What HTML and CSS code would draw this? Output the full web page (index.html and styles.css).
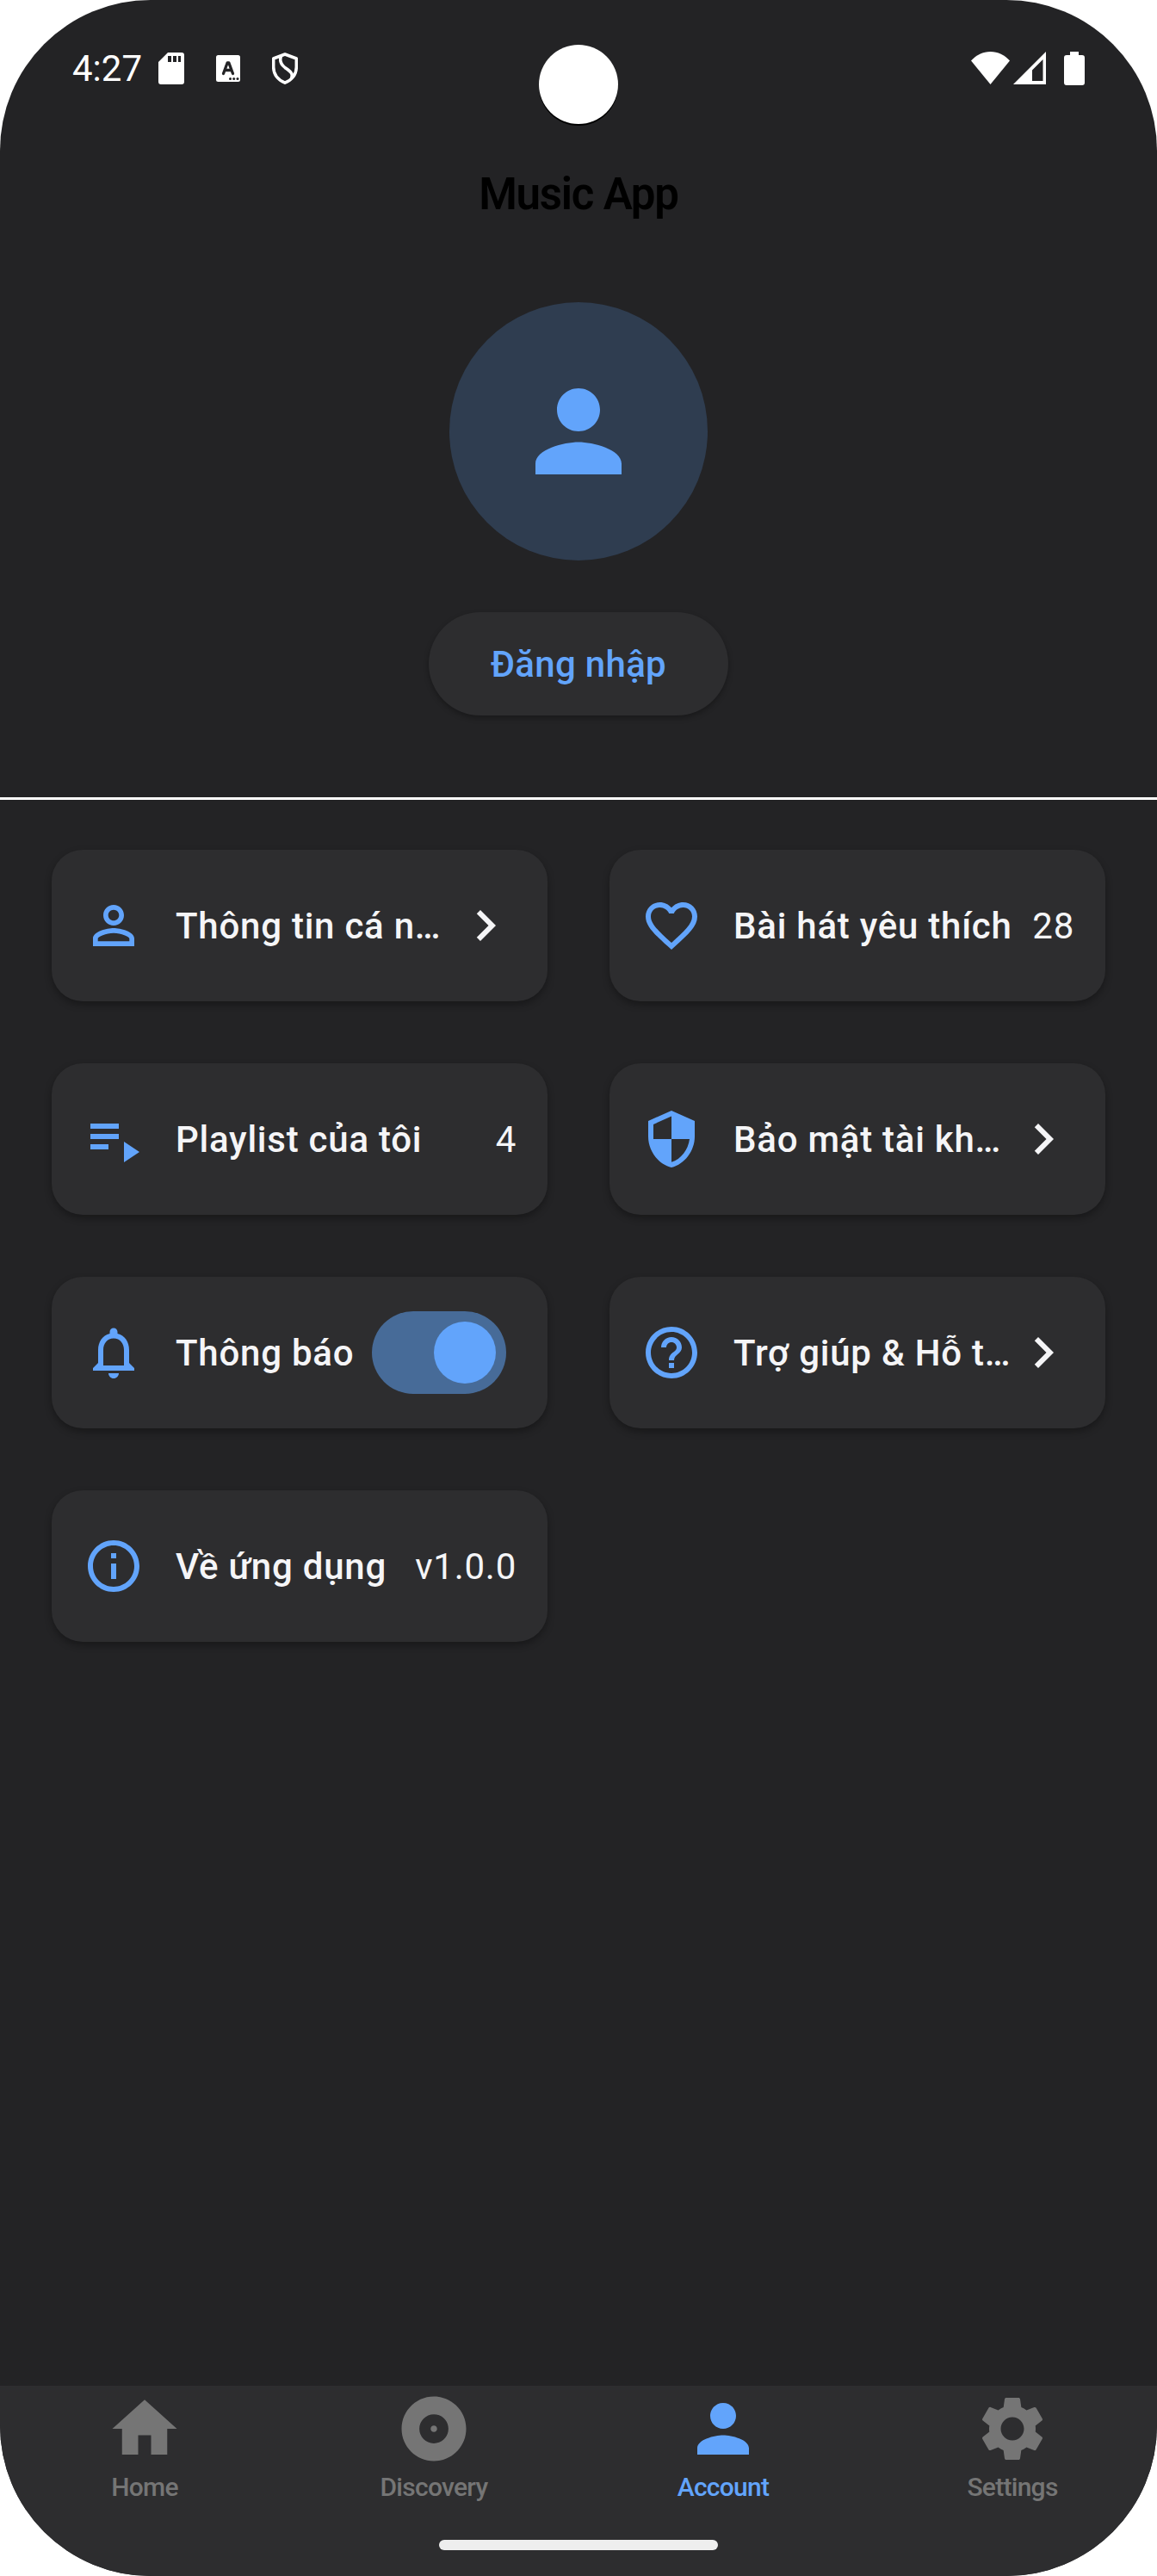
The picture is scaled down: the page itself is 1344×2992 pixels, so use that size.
FILE: index.html
```html
<!DOCTYPE html>
<html lang="vi">
<head>
<meta charset="utf-8">
<title>Music App</title>
<link rel="stylesheet" href="styles.css">
</head>
<body>
<div class="screen">
  <div class="status-bar">
    <div class="status-left">
      <span class="clock">4:27</span>
      <svg class="sd" viewBox="0 0 30 37"><path fill="#fff" fill-rule="evenodd" d="M11 0H27a3 3 0 0 1 3 3V34a3 3 0 0 1-3 3H3a3 3 0 0 1-3-3V11ZM11 4V11H15V4ZM17 4V11H21V4ZM23 4V11H26V4Z"/></svg>
      <svg class="lang" viewBox="0 0 28 31"><rect width="28" height="31" rx="2.500" fill="#fff"/><path d="M8.500 21.500L13.200 8.800H14.800L19.500 21.500M10.500 17.500H17.500" fill="none" stroke="#232325" stroke-width="3.300" stroke-linecap="round" stroke-linejoin="round"/><g fill="#232325"><circle cx="16.500" cy="27.500" r="1.500"/><circle cx="20.700" cy="27.500" r="1.500"/><circle cx="25" cy="27.500" r="1.500"/></g></svg>
      <svg class="guard" viewBox="0 0 30 37"><path d="M15 2L28.300 7V17C28.300 25 23.500 31.500 15 35.200C6.500 31.500 1.700 25 1.700 17V7ZM10.500 4.500C8.500 9.500 10 13.500 15 17.500C20.500 21.500 25 24 22.500 29.500" fill="none" stroke="#fff" stroke-width="3.500" stroke-linejoin="round"/></svg>
    </div>
    <div class="camera"></div>
    <div class="status-right">
      <svg class="wifi" viewBox="0 0 45 38"><path fill="#fff" d="M22.500 38L0 10.500C6 4 14 0 22.500 0S39 4 45 10.500Z"/></svg>
      <svg class="signal" viewBox="0 0 38 38"><path fill="#fff" fill-rule="evenodd" d="M38 0V38H0ZM34.500 9L22 21.500V34H34.500Z"/></svg>
      <svg class="battery" viewBox="0 0 24 39"><path fill="#fff" d="M7 0H17V4H21a3 3 0 0 1 3 3V36a3 3 0 0 1-3 3H3a3 3 0 0 1-3-3V7a3 3 0 0 1 3-3H7Z"/></svg>
    </div>
  </div>
  <h1 class="title">Music App</h1>
  <div class="profile">
    <div class="avatar"><svg viewBox="0 0 24 24"><path d="M12 12c2.210 0 4-1.790 4-4s-1.790-4-4-4-4 1.790-4 4 1.790 4 4 4zm0 2c-2.670 0-8 1.340-8 4v2h16v-2c0-2.660-5.330-4-8-4z"/></svg></div>
    <button class="login">Đăng nhập</button>
  </div>
  <div class="grid">
    <div class="card">
      <svg class="icon" viewBox="0 0 24 24"><path d="M12 5.900c1.160 0 2.100.94 2.100 2.100s-.94 2.100-2.100 2.100S9.900 9.160 9.900 8s.94-2.100 2.100-2.100m0 9c2.970 0 6.100 1.460 6.100 2.100v1.100H5.900V17c0-.64 3.130-2.100 6.100-2.100M12 4C9.790 4 8 5.790 8 8s1.790 4 4 4 4-1.790 4-4-1.790-4-4-4zm0 9c-2.670 0-8 1.340-8 4v3h16v-3c0-2.660-5.330-4-8-4z"/></svg>
      <span class="label">Thông tin cá n…</span>
      <svg class="chevron" viewBox="0 0 24 24"><path d="M10 6L8.590 7.410 13.170 12l-4.580 4.590L10 18l6-6z"/></svg>
    </div>
    <div class="card">
      <svg class="icon" viewBox="0 0 24 24"><path d="M16.500 3c-1.740 0-3.410.81-4.500 2.090C10.910 3.810 9.240 3 7.500 3 4.420 3 2 5.420 2 8.500c0 3.780 3.400 6.860 8.550 11.540L12 21.350l1.450-1.320C18.600 15.360 22 12.280 22 8.500 22 5.420 19.580 3 16.500 3zm-4.400 15.550l-.1.100-.1-.1C7.140 14.240 4 11.390 4 8.500 4 6.500 5.500 5 7.500 5c1.540 0 3.040.99 3.570 2.360h1.870C13.460 5.990 14.960 5 16.500 5c2 0 3.500 1.500 3.500 3.500 0 2.890-3.140 5.740-7.900 10.050z"/></svg>
      <span class="label">Bài hát yêu thích</span>
      <span class="value">28</span>
    </div>
    <div class="card">
      <svg class="icon" viewBox="0 0 24 24"><path d="M3 10h11v2H3zM3 6h11v2H3zM3 14h7v2H3zM16 13v8l6-4z"/></svg>
      <span class="label">Playlist của tôi</span>
      <span class="value">4</span>
    </div>
    <div class="card">
      <svg class="icon" viewBox="0 0 24 24"><path d="M12 1L3 5v6c0 5.550 3.840 10.740 9 12 5.160-1.260 9-6.450 9-12V5l-9-4zm0 10.990h7c-.53 4.120-3.280 7.790-7 8.940V12H5V6.300l7-3.110v8.800z"/></svg>
      <span class="label">Bảo mật tài kh…</span>
      <svg class="chevron" viewBox="0 0 24 24"><path d="M10 6L8.590 7.410 13.170 12l-4.580 4.590L10 18l6-6z"/></svg>
    </div>
    <div class="card">
      <svg class="icon" viewBox="0 0 24 24"><path d="M12 22c1.100 0 2-.9 2-2h-4c0 1.100.9 2 2 2zm6-6v-5c0-3.070-1.630-5.640-4.500-6.320V4c0-.83-.67-1.500-1.500-1.500s-1.500.67-1.500 1.500v.68C7.640 5.360 6 7.920 6 11v5l-2 2v1h16v-1l-2-2zm-2 1H8v-6c0-2.480 1.510-4.500 4-4.500s4 2.020 4 4.500v6z"/></svg>
      <span class="label">Thông báo</span>
      <span class="switch"><span class="thumb"></span></span>
    </div>
    <div class="card">
      <svg class="icon" viewBox="0 0 24 24"><path d="M11 18h2v-2h-2v2zm1-16C6.480 2 2 6.480 2 12s4.480 10 10 10 10-4.480 10-10S17.520 2 12 2zm0 18c-4.410 0-8-3.590-8-8s3.590-8 8-8 8 3.590 8 8-3.590 8-8 8zm0-14c-2.210 0-4 1.790-4 4h2c0-1.100.9-2 2-2s2 .9 2 2c0 2-3 1.750-3 5h2c0-2.250 3-2.500 3-5 0-2.210-1.790-4-4-4z"/></svg>
      <span class="label">Trợ giúp &amp; Hỗ t…</span>
      <svg class="chevron" viewBox="0 0 24 24"><path d="M10 6L8.590 7.410 13.170 12l-4.580 4.590L10 18l6-6z"/></svg>
    </div>
    <div class="card">
      <svg class="icon" viewBox="0 0 24 24"><path d="M11 7h2v2h-2zm0 4h2v6h-2zm1-9C6.480 2 2 6.480 2 12s4.480 10 10 10 10-4.480 10-10S17.520 2 12 2zm0 18c-4.410 0-8-3.590-8-8s3.590-8 8-8 8 3.590 8 8-3.590 8-8 8z"/></svg>
      <span class="label">Về ứng dụng</span>
      <span class="value">v1.0.0</span>
    </div>
  </div>
  <nav class="tabs">
    <div class="tab-row">
      <div class="tab"><svg viewBox="0 0 24 24"><path d="M10 20v-6h4v6h5v-8h3L12 3 2 12h3v8z"/></svg>Home</div>
      <div class="tab"><svg viewBox="0 0 24 24"><path d="M12 2C6.480 2 2 6.480 2 12s4.480 10 10 10 10-4.480 10-10S17.520 2 12 2zm0 14.500c-2.490 0-4.500-2.010-4.500-4.500S9.510 7.500 12 7.500s4.500 2.010 4.500 4.500-2.010 4.500-4.500 4.500zm0-5.500c-.55 0-1 .45-1 1s.45 1 1 1 1-.45 1-1-.45-1-1-1z"/></svg>Discovery</div>
      <div class="tab active"><svg viewBox="0 0 24 24"><path d="M12 12c2.210 0 4-1.790 4-4s-1.790-4-4-4-4 1.790-4 4 1.790 4 4 4zm0 2c-2.670 0-8 1.340-8 4v2h16v-2c0-2.660-5.330-4-8-4z"/></svg>Account</div>
      <div class="tab"><svg viewBox="0 0 24 24"><path d="M19.140 12.940c.04-.3.060-.61.060-.94 0-.32-.02-.64-.07-.94l2.030-1.580c.18-.14.230-.41.120-.61l-1.920-3.320c-.12-.22-.37-.29-.59-.22l-2.390.96c-.5-.38-1.030-.7-1.620-.94l-.36-2.540c-.04-.24-.24-.41-.48-.41h-3.840c-.24 0-.43.17-.47.41l-.36 2.540c-.59.24-1.130.57-1.620.94l-2.390-.96c-.22-.08-.47 0-.59.22L2.740 8.870c-.12.21-.08.470.12.610l2.030 1.580c-.05.3-.09.630-.09.940s.02.640.07.940l-2.030 1.580c-.18.14-.23.410-.12.610l1.920 3.320c.12.220.37.290.59.220l2.390-.96c.5.380 1.030.700 1.620.940l.36 2.540c.05.240.24.410.48.410h3.840c.24 0 .44-.17.470-.41l.36-2.540c.59-.24 1.130-.56 1.620-.94l2.390.96c.22.080.47 0 .59-.22l1.920-3.320c.12-.22.070-.47-.12-.61l-2.010-1.580zM12 15.600c-1.980 0-3.600-1.620-3.600-3.600s1.620-3.600 3.600-3.600 3.600 1.620 3.600 3.600-1.620 3.600-3.600 3.600z"/></svg>Settings</div>
    </div>
    <div class="home-indicator"></div>
  </nav>
</div>
</body>
</html>
```
FILE: styles.css
```css
* { box-sizing: border-box; }
body { margin: 0; background: #fff; font-family: Roboto, "Noto Sans", sans-serif; }
svg { display: block; flex: none; }
.screen {
  display: flex; flex-direction: column;
  width: 1344px; height: 2992px;
  background: #232325; border-radius: 175px; overflow: hidden;
}
.status-bar {
  display: grid; grid-template-columns: 1fr 92px 1fr; align-items: center;
  height: 158px; padding: 0 84px; flex: none;
}
.status-left, .status-right { display: flex; align-items: center; }
.status-right { justify-content: flex-end; }
.clock { font-size: 42px; line-height: 48px; padding-top: 2px; color: #fff; width: 100px; }
.sd { width: 30px; height: 37px; }
.lang { width: 28px; height: 31px; margin-left: 37px; }
.guard { width: 30px; height: 37px; margin-left: 37px; }
.camera { width: 92px; height: 92px; border-radius: 50%; background: #fff; margin-top: 38px; box-shadow: 0 2px 0 #000; }
.wifi { width: 45px; height: 38px; }
.signal { width: 38px; height: 38px; margin-left: 4px; }
.battery { width: 24px; height: 39px; margin-left: 21px; }
.title {
  margin: 0; padding-top: 1px; height: 133px; flex: none;
  font-size: 51px; line-height: 133px; font-weight: 600; letter-spacing: -1.23px;
  text-align: center; color: #000;
}
.profile {
  display: flex; flex-direction: column; align-items: center; gap: 60px;
  height: 638px; padding-top: 60px; flex: none; border-bottom: 3px solid #fff;
}
.avatar {
  display: flex; align-items: center; justify-content: center;
  width: 300px; height: 300px; border-radius: 50%; background: #2f3d50;
}
.avatar svg { width: 150px; height: 150px; fill: #62a4fb; }
.login {
  height: 120px; width: 348px; padding: 2px 0 0; border: 0; border-radius: 60px;
  background: #2d2d2f; color: #62a4fb;
  font: 500 42px/60px Roboto, sans-serif; letter-spacing: .3px;
  box-shadow: 0 3px 6px rgba(0,0,0,.3);
}
.grid {
  display: grid; grid-template-columns: 576px 576px; grid-auto-rows: 176px;
  gap: 72px; padding: 58px 60px; flex: 1; align-content: start;
}
.card {
  display: flex; align-items: center; padding: 0 36px; border-radius: 36px;
  background: #2d2d2f; color: #f5f5f7; fill: #f5f5f7;
  font-size: 42px; line-height: 60px;
  box-shadow: 0 4px 9px rgba(0,0,0,.32);
}
.icon { width: 72px; height: 72px; fill: #62a4fb; margin-right: 36px; }
.label {
  flex: 1; min-width: 0; padding-top: 2px; font-weight: 500; letter-spacing: .75px;
  white-space: nowrap;
}
.value { padding-top: 2px; font-weight: 400; letter-spacing: .75px; }
.chevron { width: 72px; height: 72px; }
.switch {
  display: flex; align-items: center; justify-content: flex-end;
  width: 156px; height: 96px; padding: 12px; margin-right: 12px;
  border-radius: 48px; background: #476b98;
}
.thumb { width: 72px; height: 72px; border-radius: 50%; background: #62a4fb; }
.tabs {
  display: flex; flex-direction: column; align-items: center; justify-content: space-between;
  height: 221px; padding: 5px 0 30px; flex: none; background: #2d2d2f;
}
.tab-row { display: grid; grid-template-columns: repeat(4, 1fr); width: 100%; }
.tab {
  display: flex; flex-direction: column; align-items: center; gap: 5px;
  color: #757575; fill: #757575;
  font-size: 30px; line-height: 36px; font-weight: 500; letter-spacing: -.72px;
}
.tab svg { width: 90px; height: 90px; }
.tab.active { color: #62a4fb; fill: #62a4fb; }
.home-indicator { width: 324px; height: 12px; border-radius: 6px; background: #eee; }
```
